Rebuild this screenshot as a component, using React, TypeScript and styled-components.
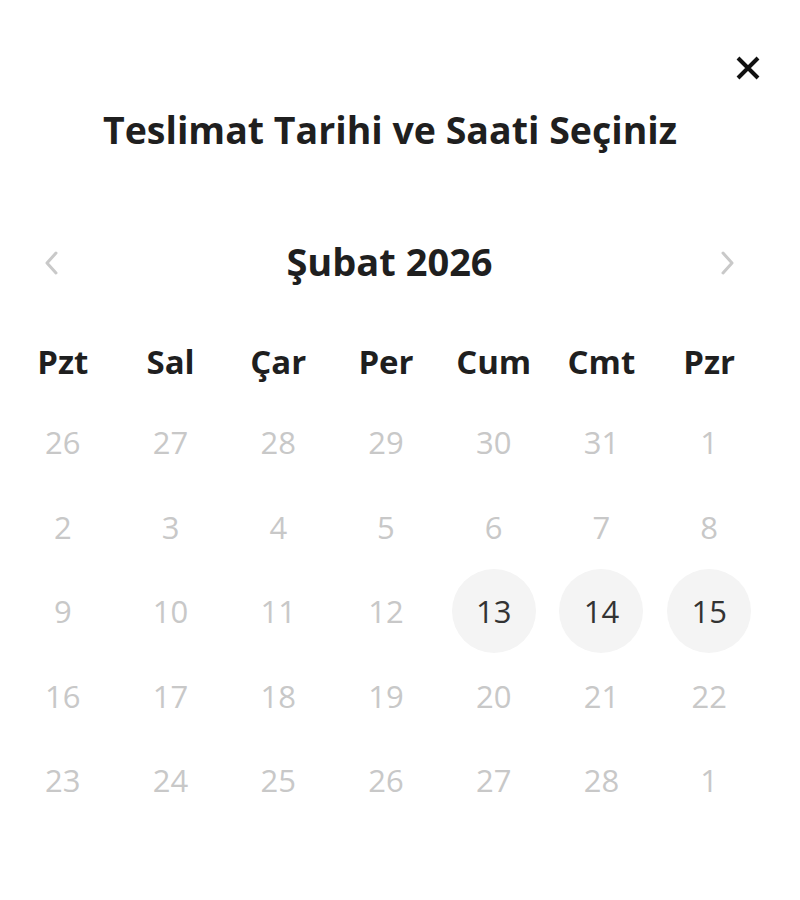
import styled, { createGlobalStyle } from 'styled-components';

const GlobalStyle = createGlobalStyle`
  html, body {
    margin: 0;
    padding: 0;
    background: #fff;
    font-family: "Open Sans", "Noto Sans", sans-serif;
  }
`;

const Modal = styled.div`
  position: relative;
  width: 800px;
  height: 900px;
  box-sizing: border-box;
  padding: 106px 37px 0 9px;
  background: #fff;
  color: #1f1f1f;
`;

const CloseButton = styled.button`
  position: absolute;
  top: 52px;
  right: 36px;
  width: 32px;
  height: 32px;
  padding: 0;
  border: 0;
  background: none;
  display: flex;
  align-items: center;
  justify-content: center;
  cursor: pointer;
`;

const Title = styled.h2`
  margin: 0;
  text-align: center;
  font-size: 37.5px;
  font-weight: 700;
  line-height: 48px;
  padding-left: 8px;
`;

const MonthBar = styled.div`
  display: flex;
  align-items: center;
  justify-content: space-between;
  margin-top: 82px;
  height: 50px;
  padding: 0 21px 0 28px;
`;

const MonthName = styled.div`
  font-size: 38px;
  font-weight: 700;
  line-height: 50px;
`;

const NavArrow = styled.button`
  width: 28px;
  height: 28px;
  margin-top: 4px;
  padding: 0;
  border: 0;
  background: none;
  display: flex;
  align-items: center;
  justify-content: center;
  color: #c9c9c9;
`;

const Grid = styled.div`
  display: grid;
  grid-template-columns: repeat(7, 1fr);
  margin-top: 56px;
`;

const WeekDay = styled.div`
  text-align: center;
  font-size: 33px;
  font-weight: 700;
  line-height: 40px;
  margin-bottom: 18px;
`;

const DayCell = styled.div`
  display: flex;
  align-items: center;
  justify-content: center;
  height: 84.5px;
`;

const Day = styled.span<{ $available?: boolean }>`
  width: 84px;
  height: 84px;
  border-radius: 50%;
  display: flex;
  align-items: center;
  justify-content: center;
  font-size: 31px;
  font-weight: 400;
  color: ${(p) => (p.$available ? '#333' : '#c8c8c8')};
  background: ${(p) => (p.$available ? '#f4f4f4' : 'transparent')};
`;

const weekDays = ['Pzt', 'Sal', 'Çar', 'Per', 'Cum', 'Cmt', 'Pzr'];

const days = [
  26, 27, 28, 29, 30, 31, 1,
  2, 3, 4, 5, 6, 7, 8,
  9, 10, 11, 12, 13, 14, 15,
  16, 17, 18, 19, 20, 21, 22,
  23, 24, 25, 26, 27, 28, 1,
];

const available = [18, 19, 20];

export default function App() {
  return (
    <>
      <GlobalStyle />
      <Modal>
        <CloseButton aria-label="Kapat">
          <svg width="24" height="24" viewBox="0 0 24 24">
            <path d="M2 2 L22 22 M22 2 L2 22" stroke="#111" strokeWidth="4" strokeLinecap="butt" />
          </svg>
        </CloseButton>
        <Title>Teslimat Tarihi ve Saati Seçiniz</Title>
        <MonthBar>
          <NavArrow aria-label="Önceki ay">
            <svg width="14" height="26" viewBox="0 0 14 26">
              <path d="M12 3 L3 13 L12 23" fill="none" stroke="currentColor" strokeWidth="3" strokeLinecap="round" strokeLinejoin="round" />
            </svg>
          </NavArrow>
          <MonthName>Şubat 2026</MonthName>
          <NavArrow aria-label="Sonraki ay">
            <svg width="14" height="26" viewBox="0 0 14 26">
              <path d="M2 3 L11 13 L2 23" fill="none" stroke="currentColor" strokeWidth="3" strokeLinecap="round" strokeLinejoin="round" />
            </svg>
          </NavArrow>
        </MonthBar>
        <Grid>
          {weekDays.map((d) => (
            <WeekDay key={d}>{d}</WeekDay>
          ))}
          {days.map((d, i) => (
            <DayCell key={i}>
              <Day $available={available.includes(i)}>{d}</Day>
            </DayCell>
          ))}
        </Grid>
      </Modal>
    </>
  );
}
